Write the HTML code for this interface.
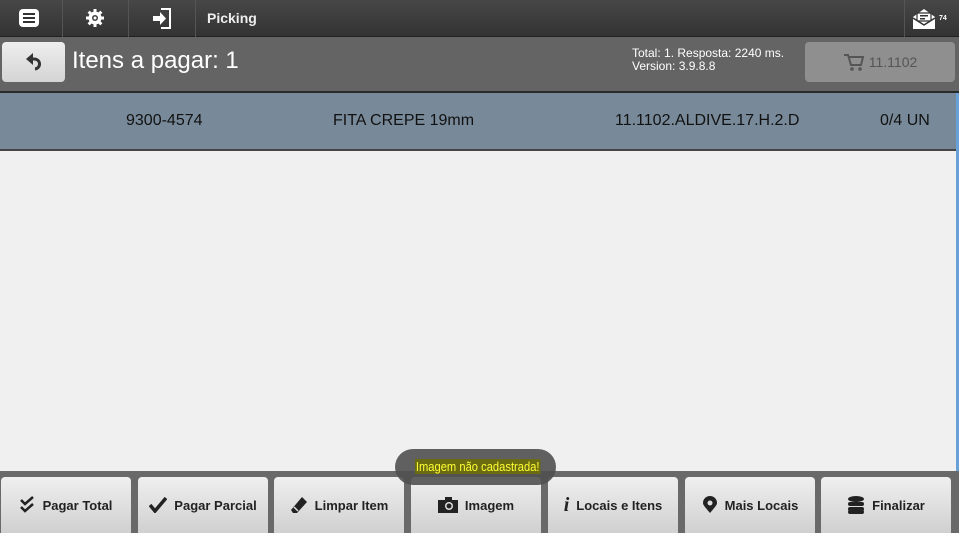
<!DOCTYPE html>
<html><head><meta charset="utf-8"><style>
*{margin:0;padding:0;box-sizing:border-box}
body{width:959px;height:533px;overflow:hidden;background:#f0f0f0;font-family:"Liberation Sans",sans-serif;position:relative}
.top{position:absolute;left:0;top:0;width:959px;height:37px;background:linear-gradient(#474747,#333);border-bottom:1px solid #222}
.sep{position:absolute;top:0;height:37px;width:1px;background:#222;border-right:1px solid #555}
.sub{position:absolute;left:0;top:37px;width:959px;height:56px;background:#646464;border-bottom:2px solid #2a2a2a}
.back{position:absolute;left:2px;top:42px;width:63px;height:40px;border-radius:4px;background:linear-gradient(#eee,#d4d4d4)}
.row{position:absolute;left:0;top:93px;width:959px;height:58px;background:#788a99;border-bottom:2px solid #444;color:#111;font-size:16px}
.row span{position:absolute;top:19px}
.bar{position:absolute;left:0;top:471px;width:959px;height:62px;background:#696969}
.btn{position:absolute;top:477px;height:56px;width:130px;border-radius:4px 4px 0 0;background:linear-gradient(#efefef,#d0d0d0);font-weight:bold;font-size:13px;color:#222;display:flex;align-items:center;justify-content:center;gap:7px}
.toast{position:absolute;left:395px;top:449px;width:161px;height:36px;border-radius:18px;background:rgba(80,80,80,.9);}
.toast span{position:absolute;left:20px;top:10px;background:#6b6b12;color:#ffff33;font-size:13px;padding:0 1px;transform:scaleX(.86);transform-origin:left;white-space:nowrap}
</style></head><body>
<div class="top">
<div class="sep" style="left:62px"></div><div class="sep" style="left:128px"></div><div class="sep" style="left:195px"></div><div class="sep" style="left:904px"></div>
<svg style="position:absolute;left:18px;top:8px" width="22" height="20"><rect x="1" y="1" width="20" height="18" rx="4" fill="#fff"/><rect x="5" y="5" width="12" height="2" fill="#333"/><rect x="5" y="9" width="12" height="2" fill="#333"/><rect x="5" y="13" width="12" height="2" fill="#333"/></svg>
<svg style="position:absolute;left:85px;top:8px" width="20" height="20" viewBox="0 0 20 20"><g fill="#fff"><circle cx="10" cy="10" r="6.5"/><rect x="8.5" y="1" width="3" height="18"/><rect x="1" y="8.5" width="18" height="3"/><rect x="8.5" y="1" width="3" height="18" transform="rotate(45 10 10)"/><rect x="8.5" y="1" width="3" height="18" transform="rotate(-45 10 10)"/></g><circle cx="10" cy="10" r="3" fill="#3d3d3d"/><circle cx="10" cy="10" r="1.5" fill="#fff"/></svg>
<svg style="position:absolute;left:151px;top:7px" width="22" height="23"><path d="M10 2h9v19h-9" fill="none" stroke="#fff" stroke-width="2"/><path d="M2 9h7v-4l6 6.5-6 6.5v-4h-7z" fill="#fff"/></svg>
<div style="position:absolute;left:207px;top:10px;color:#eee;font-weight:bold;font-size:14px">Picking</div>
<svg style="position:absolute;left:912px;top:7px" width="24" height="24"><path d="M1 10l11-8 11 8v12h-22z" fill="#fff"/><rect x="5" y="6" width="14" height="8" rx="1" fill="#fff" stroke="#333" stroke-width="1.2"/><rect x="8" y="8" width="8" height="1.5" fill="#333"/><rect x="8" y="11" width="5" height="1.5" fill="#333"/><path d="M1 11l11 7 11-7" fill="none" stroke="#333" stroke-width="1.5"/></svg>
<div style="position:absolute;left:939px;top:15px;color:#fff;font-size:7px;font-weight:bold">74</div>
</div>
<div class="sub">
<div style="position:absolute;left:72px;top:10px;color:#fff;font-size:24px">Itens a pagar: 1</div>
<div style="position:absolute;left:632px;top:10px;color:#fff;font-size:12px;line-height:13px">Total: 1. Resposta: 2240 ms.<br>Version: 3.9.8.8</div>
<div style="position:absolute;left:805px;top:5px;width:150px;height:40px;border-radius:4px;background:#8f8f8f;color:#555;font-size:14px;display:flex;align-items:center;justify-content:center;gap:4px"><svg width="22" height="20"><path d="M1 3h4l3 10h10l2-8h-14" fill="none" stroke="#555" stroke-width="2"/><circle cx="9" cy="17" r="1.8" fill="#555"/><circle cx="17" cy="17" r="1.8" fill="#555"/></svg>11.1102</div>
</div>
<div class="back"><svg style="position:absolute;left:22px;top:9px" width="20" height="22"><path d="M9 2l-7 6 7 6z" fill="#333"/><path d="M7 8h3a5 5 0 0 1 1 10" fill="none" stroke="#333" stroke-width="3"/></svg></div>
<div class="row"><span style="left:126px">9300-4574</span><span style="left:333px">FITA CREPE 19mm</span><span style="left:615px">11.1102.ALDIVE.17.H.2.D</span><span style="left:880px">0/4 UN</span></div>
<div style="position:absolute;left:956px;top:93px;width:3px;height:380px;background:#6aa0d8"></div>
<div class="bar"></div>
<div class="btn" style="left:1px"><svg width="16" height="18"><path d="M1 4l4 4 8-7M1 11l4 4 8-7" fill="none" stroke="#222" stroke-width="2.5"/></svg>Pagar Total</div>
<div class="btn" style="left:138px"><svg width="18" height="16"><path d="M1 8l5 6 11-13" fill="none" stroke="#222" stroke-width="3.5"/></svg>Pagar Parcial</div>
<div class="btn" style="left:274px"><svg width="18" height="18"><path d="M12 1l5 5-10 11h-4l-2-3z" fill="#222"/><path d="M4 11l4 4" stroke="#ddd" stroke-width="1.5"/></svg>Limpar Item</div>
<div class="btn" style="left:411px"><svg width="20" height="16"><rect x="0" y="3" width="20" height="13" fill="#222"/><rect x="7" y="0" width="7" height="4" fill="#222"/><circle cx="11" cy="9" r="4" fill="#ddd"/><circle cx="11" cy="9" r="2.5" fill="#222"/></svg>Imagem</div>
<div class="btn" style="left:548px"><span style="font-size:20px;font-style:italic;font-family:'Liberation Serif',serif">i</span>Locais e Itens</div>
<div class="btn" style="left:685px"><svg width="16" height="18"><path d="M8 17C3 11 1 9 1 7a7 7 0 0 1 14 0c0 2-2 4-7 10z" fill="#222"/><circle cx="8" cy="7" r="2.5" fill="#ddd"/></svg>Mais Locais</div>
<div class="btn" style="left:821px"><svg width="18" height="18"><ellipse cx="9" cy="3" rx="8" ry="3" fill="#222"/><rect x="1" y="6" width="16" height="4" rx="2" fill="#222"/><rect x="1" y="11" width="16" height="4" rx="2" fill="#222"/><rect x="1" y="14" width="16" height="4" rx="2" fill="#222"/></svg>Finalizar</div>
<div class="toast"><span>Imagem não cadastrada!</span></div>
</body></html>
